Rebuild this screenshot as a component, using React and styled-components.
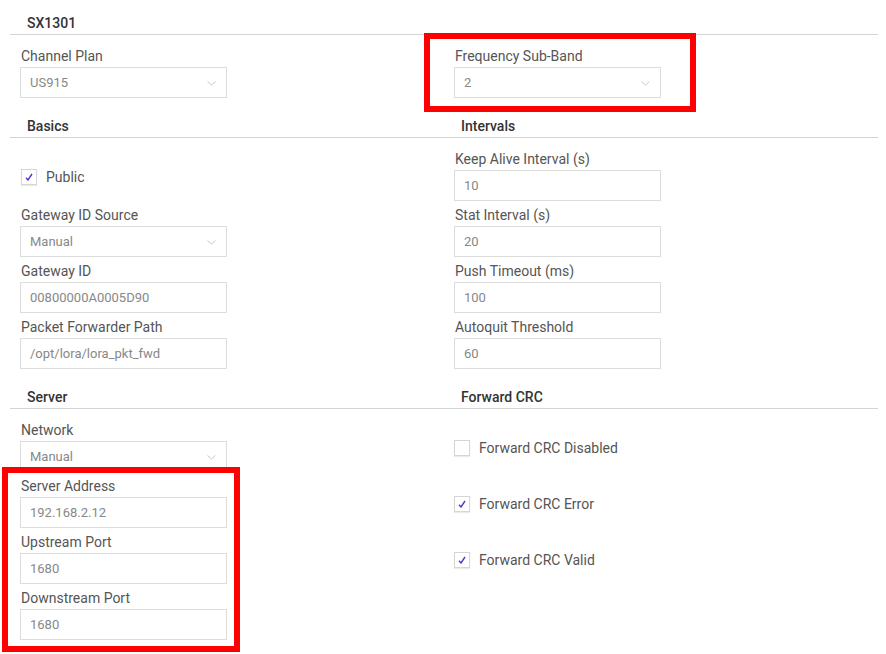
import styled, { createGlobalStyle } from 'styled-components';

const GlobalStyle = createGlobalStyle`
  body {
    margin: 0;
    background: #fff;
    font-family: Roboto, "Liberation Sans", sans-serif;
  }
`;

const Page = styled.div`
  position: relative;
  box-sizing: border-box;
  min-height: 654px;
  padding: 0 8px 0 10px;
`;

const Row = styled.div`
  display: grid;
  grid-template-columns: 434px 434px;
`;

const Column = styled.div`
  display: flex;
  flex-direction: column;
`;

const SectionHeader = styled.div`
  padding: ${(p) => (p.$first ? '13px' : '14px')} 0 1px 17px;
  line-height: 20px;
  font-size: 14px;
  font-weight: 500;
  color: #333;
  border-bottom: 1px solid #d4d4d4;
`;

const Fields = styled.div`
  display: flex;
  flex-direction: column;
  padding: 11px 0 0 10px;
`;

const Field = styled.div`
  display: flex;
  flex-direction: column;
  margin-bottom: 4px;
`;

const Label = styled.label`
  font-size: 14px;
  line-height: 20px;
  margin: 0 0 1px 1px;
  color: #555;
`;

const Input = styled.div`
  box-sizing: border-box;
  width: 207px;
  height: 31px;
  border: 1px solid #dcdcdc;
  display: flex;
  align-items: center;
  justify-content: space-between;
  padding: 0 10px 0 9px;
  font-size: 13px;
  color: #888;
`;

const Chevron = styled.svg`
  width: 9px;
  height: 5px;
  margin-top: 2px;
`;

const CheckRow = styled.div`
  height: 56px;
  display: flex;
  align-items: center;
  gap: 9px;
  padding-left: ${(p) => p.$indent || 0}px;
  font-size: 14px;
  color: #555;
`;

const Box = styled.span`
  box-sizing: border-box;
  width: 16px;
  height: 16px;
  border: 1px solid #d6d6d6;
  box-shadow: 0 1px 1px rgba(0, 0, 0, 0.08);
  display: flex;
  align-items: center;
  justify-content: center;
`;

const Highlight = styled.div`
  position: absolute;
  box-sizing: border-box;
  border: 6px solid #f00;
  pointer-events: none;
`;

function TextField({ label, value, select }) {
  return (
    <Field>
      <Label>{label}</Label>
      <Input>
        <span>{value}</span>
        {select && (
          <Chevron viewBox="0 0 9 5">
            <polyline points="0.5,0.5 4.5,4 8.5,0.5" fill="none" stroke="#c8c8c8" strokeWidth="1" />
          </Chevron>
        )}
      </Input>
    </Field>
  );
}

function Checkbox({ label, checked, indent }) {
  return (
    <CheckRow $indent={indent}>
      <Box>
        {checked && (
          <svg width="8" height="8" viewBox="0 0 8 8">
            <polyline points="1,4.8 3,7 7,1" fill="none" stroke="#5b2fd0" strokeWidth="1.4" />
          </svg>
        )}
      </Box>
      <span>{label}</span>
    </CheckRow>
  );
}

export default function App() {
  return (
    <>
      <GlobalStyle />
      <Page>
        <Row>
          <Column>
            <SectionHeader $first>SX1301</SectionHeader>
            <Fields>
              <TextField label="Channel Plan" value="US915" select />
            </Fields>
          </Column>
          <Column>
            <SectionHeader $first>&nbsp;</SectionHeader>
            <Fields>
              <TextField label="Frequency Sub-Band" value="2" select />
            </Fields>
          </Column>
        </Row>
        <Row>
          <Column>
            <SectionHeader>Basics</SectionHeader>
            <Fields>
              <Checkbox label="Public" checked indent={1} />
              <TextField label="Gateway ID Source" value="Manual" select />
              <TextField label="Gateway ID" value="00800000A0005D90" />
              <TextField label="Packet Forwarder Path" value="/opt/lora/lora_pkt_fwd" />
            </Fields>
          </Column>
          <Column>
            <SectionHeader>Intervals</SectionHeader>
            <Fields>
              <TextField label="Keep Alive Interval (s)" value="10" />
              <TextField label="Stat Interval (s)" value="20" />
              <TextField label="Push Timeout (ms)" value="100" />
              <TextField label="Autoquit Threshold" value="60" />
            </Fields>
          </Column>
        </Row>
        <Row>
          <Column>
            <SectionHeader>Server</SectionHeader>
            <Fields>
              <TextField label="Network" value="Manual" select />
              <TextField label="Server Address" value="192.168.2.12" />
              <TextField label="Upstream Port" value="1680" />
              <TextField label="Downstream Port" value="1680" />
            </Fields>
          </Column>
          <Column>
            <SectionHeader>Forward CRC</SectionHeader>
            <Fields>
              <Checkbox label="Forward CRC Disabled" />
              <Checkbox label="Forward CRC Error" checked />
              <Checkbox label="Forward CRC Valid" checked />
            </Fields>
          </Column>
        </Row>
        <Highlight style={{ left: 424, top: 33, width: 272, height: 79 }} />
        <Highlight style={{ left: 2, top: 467, width: 238, height: 185 }} />
      </Page>
    </>
  );
}
